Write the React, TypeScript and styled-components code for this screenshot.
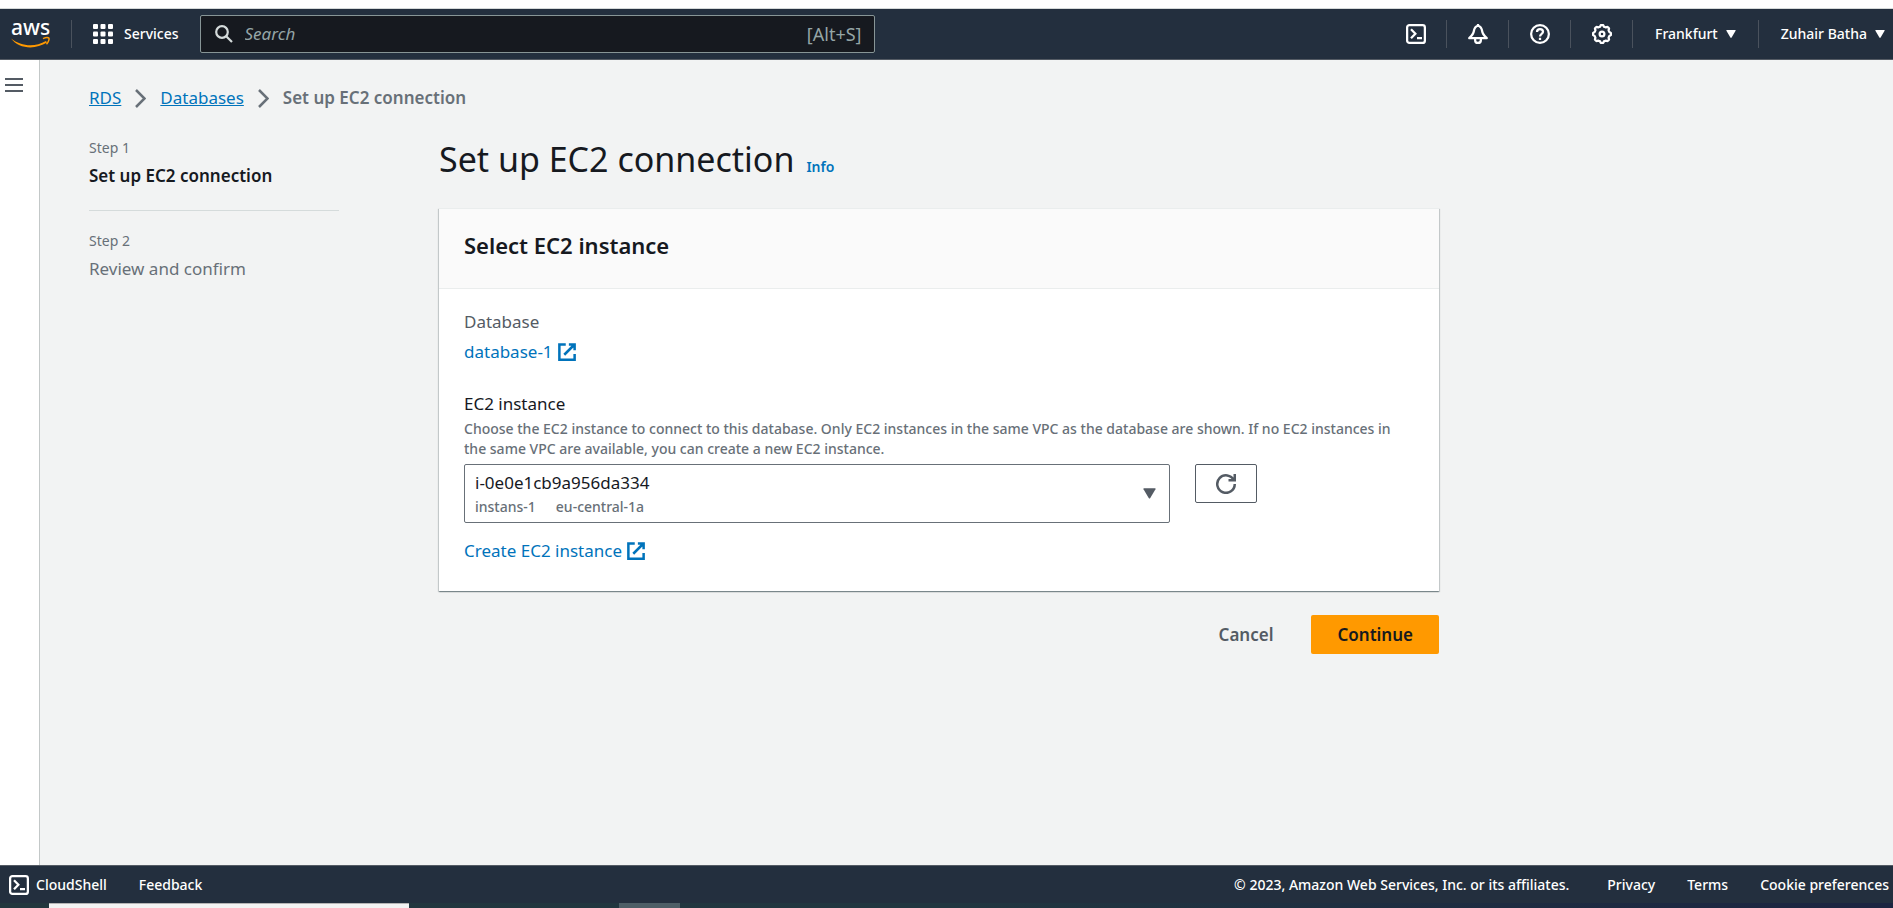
import React from 'react';
import styled, { createGlobalStyle } from 'styled-components';

const ink = '#16191f';
const muted = '#687078';
const slate = '#545b64';
const link = '#0073bb';
const navy = '#232f3e';

const GlobalStyle = createGlobalStyle`
  *, *::before, *::after { box-sizing: border-box; }
  body { margin: 0; background: #fff; }
  body, button, input, select {
    font-family: "Noto Sans", "Open Sans", sans-serif;
    font-size: 17px;
    line-height: 28px;
    color: ${ink};
  }
  h1, h2, ol, dl, dd, p { margin: 0; padding: 0; }
  ol { list-style: none; }
  svg { display: block; flex: none; }
`;

const Page = styled.div`
  display: flex;
  flex-direction: column;
  min-height: 100vh;
`;

/* Top navigation */
const TopBar = styled.header`
  display: flex;
  align-items: center;
  height: 52px;
  margin-top: 8px;
  padding: 0 8px 0 10px;
  background: ${navy};
  border-top: 1px solid #d5d9d9;
  border-bottom: 1px solid ${slate};
`;

const LogoLink = styled.a`
  display: block;
  margin-right: 19px;
`;

const Divider = styled.span`
  flex: none;
  width: 1px;
  height: 28px;
  background: #4a525d;
`;

const ServicesButton = styled.button`
  display: flex;
  align-items: center;
  gap: 11px;
  padding: 0 21px;
  border: 0;
  background: none;
  color: #fff;
  font-size: 14px;
  font-weight: 500;
`;

const SearchBox = styled.label`
  display: flex;
  align-items: center;
  flex: 1;
  gap: 12px;
  max-width: 675px;
  height: 38px;
  padding: 0 12px 0 14px;
  border: 1px solid #879596;
  border-radius: 2px;
  background: ${ink};
`;

const SearchInput = styled.input`
  flex: 1;
  min-width: 0;
  padding: 0;
  border: 0;
  outline: 0;
  background: none;
  color: #fff;
  &::placeholder {
    color: #95a5a6;
    font-style: italic;
    opacity: 1;
  }
`;

const Shortcut = styled.span`
  color: #95a5a6;
  font-size: 18px;
`;

const Tools = styled.nav`
  display: flex;
  align-items: center;
  margin-left: auto;
`;

const IconButton = styled.button`
  display: flex;
  padding: 0 20px 0 21px;
  border: 0;
  background: none;
  color: #fff;
`;

const MenuButton = styled.button<{ $last?: boolean }>`
  display: flex;
  align-items: center;
  gap: 8px;
  padding: 0 ${(p) => (p.$last ? 0 : 22)}px 0 22px;
  border: 0;
  background: none;
  color: #fff;
  font-size: 14px;
  font-weight: 500;
  white-space: nowrap;
`;

/* Body */
const Body = styled.div`
  display: flex;
  flex: 1;
  background: #f2f3f3;
`;

const SideRail = styled.aside`
  flex: none;
  width: 40px;
  padding: 17px 5px;
  background: #fff;
  border-right: 1px solid #c3c8c8;
`;

const RailButton = styled.button`
  display: block;
  padding: 0;
  border: 0;
  background: none;
  color: ${slate};
`;

const Content = styled.main`
  flex: 1;
  min-width: 0;
  padding: 24px 49px 40px;
`;

const Breadcrumbs = styled.nav`
  display: flex;
  align-items: center;
  gap: 14px;
  color: ${muted};
`;

const Crumb = styled.a`
  color: ${link};
  text-decoration: underline;
`;

const CurrentCrumb = styled.span`
  font-weight: 600;
`;

const Wizard = styled.div`
  display: flex;
  gap: 100px;
  margin-top: 17px;
`;

const Steps = styled.ol`
  flex: none;
  width: 250px;
  padding-top: 5px;
`;

const Step = styled.li`
  padding-bottom: 20px;
  color: ${muted};
  & + & {
    padding-top: 16px;
    border-top: 1px solid #d5dbdb;
  }
`;

const StepNumber = styled.div`
  font-size: 14px;
`;

const StepName = styled.div<{ $active?: boolean }>`
  color: ${(p) => (p.$active ? ink : muted)};
  font-weight: ${(p) => (p.$active ? 600 : 400)};
`;

const Form = styled.form`
  flex: 1;
  min-width: 0;
  max-width: 1000px;
`;

const TitleRow = styled.div`
  display: flex;
  align-items: baseline;
  gap: 12px;
  margin-bottom: 19px;
`;

const Title = styled.h1`
  font-size: 34px;
  font-weight: 400;
  line-height: 60px;
`;

const InfoLink = styled.a`
  color: ${link};
  font-size: 14px;
  font-weight: 600;
  text-decoration: none;
`;

const Card = styled.section`
  background: #fff;
  border-top: 1px solid #eaeded;
  box-shadow: 0 1px 1px rgba(0, 28, 36, 0.3), 1px 1px 1px rgba(0, 28, 36, 0.15),
    -1px 1px 1px rgba(0, 28, 36, 0.15);
`;

const CardHeader = styled.div`
  padding: 22px 25px 29px;
  background: #fafafa;
  border-bottom: 1px solid #eaeded;
`;

const CardTitle = styled.h2`
  font-size: 22px;
  font-weight: 600;
  line-height: 28px;
`;

const CardBody = styled.div`
  padding: 19px 25px 26px;
`;

const Pair = styled.dl`
  display: flex;
  flex-direction: column;
  gap: 2px;
  margin-bottom: 24px;
`;

const Term = styled.dt`
  color: ${slate};
`;

const ExternalLink = styled.a`
  display: inline-flex;
  align-items: center;
  gap: 4px;
  color: ${link};
  text-decoration: none;
`;

const FieldLabel = styled.label`
  display: block;
`;

const Hint = styled.p`
  padding: 1px 0 5px;
  color: ${muted};
  font-size: 14px;
  font-weight: 500;
  line-height: 20px;
`;

const FieldRow = styled.div`
  display: flex;
  align-items: flex-start;
  gap: 25px;
  margin-bottom: 14px;
`;

const SelectFrame = styled.div`
  display: grid;
  flex: 1;
  max-width: 706px;
  color: ${slate};
  & > * { grid-area: 1 / 1; }
  & > svg {
    align-self: center;
    justify-self: end;
    margin-right: 14px;
    pointer-events: none;
  }
`;

const InstanceSelect = styled.select`
  height: 59px;
  padding: 0 44px 22px 10px;
  appearance: none;
  border: 1px solid ${muted};
  border-radius: 2px;
  background: #fff;
`;

const InstanceTags = styled.div`
  display: flex;
  align-self: end;
  gap: 20px;
  padding: 0 11px 6px;
  color: ${muted};
  font-size: 14px;
  font-weight: 500;
  line-height: 20px;
  pointer-events: none;
`;

const RefreshButton = styled.button`
  display: flex;
  align-items: center;
  justify-content: center;
  width: 62px;
  height: 39px;
  padding: 0;
  border: 1px solid ${slate};
  border-radius: 2px;
  background: #fff;
  color: ${slate};
`;

const Actions = styled.div`
  display: flex;
  justify-content: flex-end;
  gap: 12px;
  margin-top: 24px;
`;

const ActionButton = styled.button<{ $primary?: boolean }>`
  height: 39px;
  padding: 0 26px;
  border: 0;
  border-radius: 2px;
  background: ${(p) => (p.$primary ? '#ff9900' : 'transparent')};
  color: ${(p) => (p.$primary ? ink : slate)};
  font-weight: 600;
`;

/* Footer */
const Footer = styled.footer`
  display: flex;
  align-items: center;
  justify-content: space-between;
  height: 38px;
  padding: 0 4px 0 9px;
  background: ${navy};
  border-top: 1px solid ${slate};
  color: #fff;
  font-size: 14px;
  font-weight: 500;
  white-space: nowrap;
`;

const FooterGroup = styled.div`
  display: flex;
  align-items: center;
  gap: 32px;
`;

const FooterLegal = styled.span`
  margin-right: 6px;
`;

const FooterLink = styled.a`
  display: flex;
  align-items: center;
  gap: 7px;
  color: #fff;
  text-decoration: none;
`;

const Taskbar = styled.div`
  display: flex;
  gap: 210px;
  height: 5px;
  padding-left: 49px;
  background: linear-gradient(90deg, #22363d, #213640 50%, #1c2541);
`;

const TaskbarItem = styled.span<{ $light?: boolean }>`
  width: ${(p) => (p.$light ? 360 : 61)}px;
  background: ${(p) => (p.$light ? '#f3f3f3' : '#4d5e66')};
  border-top: ${(p) => (p.$light ? '1px solid #b5b5b5' : 0)};
`;

/* Icons */
const Glyph = ({ children }: { children: React.ReactNode }) => (
  <svg width="20" height="20" viewBox="0 0 16 16" fill="none" stroke="currentColor" strokeWidth="1.8" aria-hidden="true">
    {children}
  </svg>
);

const AwsLogo = () => (
  <svg width="42" height="48" viewBox="0 -8 42 48" role="img" aria-label="AWS home">
    <text x="1" y="17" fill="#fff" fontFamily="Noto Sans, sans-serif" fontWeight="500" fontSize="21">aws</text>
    <path d="M1 20.500C11 28.500 25 29.500 36 23l1 1.600C25 32 9 31 1 20.500z" fill="#f90" />
    <path d="M33 20.700c3-1.500 5.500-1.200 6-.5.4 1-.5 4-2.500 6" fill="none" stroke="#f90" strokeWidth="1.500" />
  </svg>
);

const GridIcon = () => (
  <svg width="20" height="20" viewBox="0 0 40 40" fill="#fff" aria-hidden="true">
    {[0, 15, 30].map((y) => [0, 15, 30].map((x) => <rect key={`${x}-${y}`} x={x} y={y} width="10" height="10" rx="2" />))}
  </svg>
);

const SearchIcon = () => (
  <svg width="18" height="18" viewBox="0 0 18 18" fill="none" stroke="#d5dbdb" strokeWidth="2.200" aria-hidden="true">
    <circle cx="7" cy="7" r="5.800" />
    <path d="M11.200 11.200 17 17" />
  </svg>
);

const ShellIcon = () => (
  <Glyph>
    <rect x=".9" y=".9" width="14.200" height="14.200" rx="1.800" />
    <path d="M4 4.200 7.500 7.800 4 11.400M8.800 11.300h4" />
  </Glyph>
);

const BellIcon = () => (
  <Glyph>
    <path d="M8 1.400C6 1.900 5 3.400 4.700 5.600 4.400 8 3.400 9 1 11.300h14C12.600 9 11.600 8 11.300 5.600 11 3.400 10 1.900 8 1.400z" strokeLinejoin="round" />
    <path d="M8 0v2M5.700 11.500v1.400a2.300 2.200 0 0 0 4.600 0v-1.400" />
  </Glyph>
);

const HelpIcon = () => (
  <Glyph>
    <circle cx="8" cy="8" r="7.100" />
    <path d="M5.600 6.300C5.600 4.800 6.600 4 8 4s2.400.9 2.400 2.200C10.400 7.900 8 7.800 8 10M8 10.900v1.800" />
  </Glyph>
);

const gearPath =
  Array.from({ length: 96 }, (_, i) => {
    const a = (i / 96) * Math.PI * 2;
    const r = 6.6 + 0.6 * Math.tanh(2.5 * Math.cos(8 * a));
    return `${i ? 'L' : 'M'}${(8 + r * Math.sin(a)).toFixed(2)} ${(8 - r * Math.cos(a)).toFixed(2)}`;
  }).join('') + 'Z';

const GearIcon = () => (
  <Glyph>
    <path d={gearPath} strokeLinejoin="round" />
    <circle cx="8" cy="8" r="1.900" />
  </Glyph>
);

const ExternalIcon = () => (
  <Glyph>
    <path d="M7 1.900H1.900v12.200h12.200V9.500M9.500 1.900h4.600v4.600M5.800 10.200l8-8" strokeWidth="2" />
  </Glyph>
);

const RefreshIcon = () => (
  <Glyph>
    <path d="M15 8a7 7 0 1 1-.7-3M10 5h5V0" strokeWidth="2" />
  </Glyph>
);

const MenuIcon = () => (
  <svg width="18" height="16" viewBox="0 0 18 16" stroke="currentColor" strokeWidth="2" aria-hidden="true">
    <path d="M0 2h18M0 8h18M0 14h18" />
  </svg>
);

const ChevronIcon = () => (
  <svg width="11" height="20" viewBox="0 0 11 20" fill="none" stroke="#687078" strokeWidth="2.500" aria-hidden="true">
    <path d="M1 2l8.500 8.500L1 19" />
  </svg>
);

const CaretIcon = ({ size = 10 }: { size?: number }) => (
  <svg width={size} height={size} viewBox="0 0 10 10" fill="currentColor" aria-hidden="true">
    <path d="M.8 1h8.400q.8 0 .4.700L5.600 8.500q-.6.800-1.200 0L.4 1.700Q0 1 .8 1z" />
  </svg>
);

const tools = [
  { label: 'CloudShell', Icon: ShellIcon },
  { label: 'Notifications', Icon: BellIcon },
  { label: 'Help', Icon: HelpIcon },
  { label: 'Settings', Icon: GearIcon },
];

export default function App() {
  return (
    <Page>
      <GlobalStyle />
      <TopBar>
        <LogoLink href="#"><AwsLogo /></LogoLink>
        <Divider />
        <ServicesButton type="button"><GridIcon />Services</ServicesButton>
        <SearchBox>
          <SearchIcon />
          <SearchInput type="search" placeholder="Search" aria-label="Search" />
          <Shortcut>[Alt+S]</Shortcut>
        </SearchBox>
        <Tools aria-label="Account tools">
          {tools.map(({ label, Icon }) => (
            <React.Fragment key={label}>
              <IconButton type="button" aria-label={label}><Icon /></IconButton>
              <Divider />
            </React.Fragment>
          ))}
          <MenuButton type="button">Frankfurt<CaretIcon /></MenuButton>
          <Divider />
          <MenuButton type="button" $last>Zuhair Batha<CaretIcon /></MenuButton>
        </Tools>
      </TopBar>

      <Body>
        <SideRail>
          <RailButton type="button" aria-label="Open navigation"><MenuIcon /></RailButton>
        </SideRail>
        <Content>
          <Breadcrumbs aria-label="Breadcrumbs">
            <Crumb href="#">RDS</Crumb>
            <ChevronIcon />
            <Crumb href="#">Databases</Crumb>
            <ChevronIcon />
            <CurrentCrumb>Set up EC2 connection</CurrentCrumb>
          </Breadcrumbs>

          <Wizard>
            <Steps>
              <Step>
                <StepNumber>Step 1</StepNumber>
                <StepName $active>Set up EC2 connection</StepName>
              </Step>
              <Step>
                <StepNumber>Step 2</StepNumber>
                <StepName>Review and confirm</StepName>
              </Step>
            </Steps>

            <Form>
              <TitleRow>
                <Title>Set up EC2 connection</Title>
                <InfoLink href="#">Info</InfoLink>
              </TitleRow>
              <Card>
                <CardHeader><CardTitle>Select EC2 instance</CardTitle></CardHeader>
                <CardBody>
                  <Pair>
                    <Term>Database</Term>
                    <dd><ExternalLink href="#">database-1<ExternalIcon /></ExternalLink></dd>
                  </Pair>
                  <FieldLabel htmlFor="instance">EC2 instance</FieldLabel>
                  <Hint>
                    Choose the EC2 instance to connect to this database. Only EC2 instances in the same VPC as the
                    database are shown. If no EC2 instances in the same VPC are available, you can create a new EC2
                    instance.
                  </Hint>
                  <FieldRow>
                    <SelectFrame>
                      <InstanceSelect id="instance">
                        <option>i-0e0e1cb9a956da334</option>
                      </InstanceSelect>
                      <InstanceTags><span>instans-1</span><span>eu-central-1a</span></InstanceTags>
                      <CaretIcon size={13} />
                    </SelectFrame>
                    <RefreshButton type="button" aria-label="Refresh instances"><RefreshIcon /></RefreshButton>
                  </FieldRow>
                  <ExternalLink href="#">Create EC2 instance<ExternalIcon /></ExternalLink>
                </CardBody>
              </Card>
              <Actions>
                <ActionButton type="button">Cancel</ActionButton>
                <ActionButton type="button" $primary>Continue</ActionButton>
              </Actions>
            </Form>
          </Wizard>
        </Content>
      </Body>

      <Footer>
        <FooterGroup>
          <FooterLink href="#"><ShellIcon />CloudShell</FooterLink>
          <FooterLink href="#">Feedback</FooterLink>
        </FooterGroup>
        <FooterGroup>
          <FooterLegal>© 2023, Amazon Web Services, Inc. or its affiliates.</FooterLegal>
          <FooterLink href="#">Privacy</FooterLink>
          <FooterLink href="#">Terms</FooterLink>
          <FooterLink href="#">Cookie preferences</FooterLink>
        </FooterGroup>
      </Footer>
      <Taskbar>
        <TaskbarItem $light />
        <TaskbarItem />
      </Taskbar>
    </Page>
  );
}
